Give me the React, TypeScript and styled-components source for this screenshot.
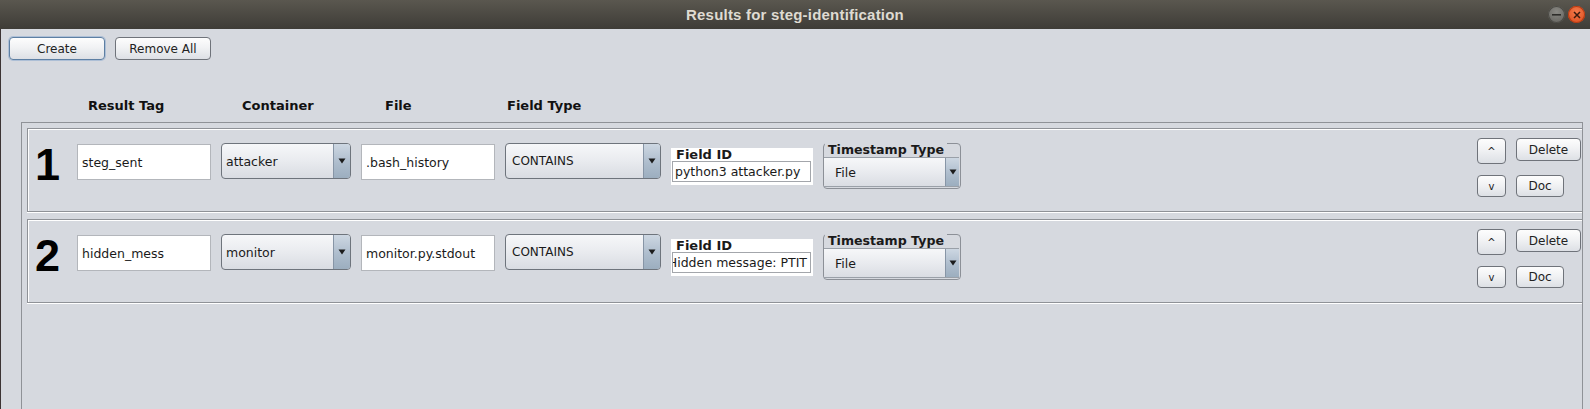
import styled, { createGlobalStyle, css } from 'styled-components';

const GlobalStyle = createGlobalStyle`
  html, body {
    margin: 0;
    padding: 0;
    background: #d6d9df;
    overflow: hidden;
  }
`;

const UI_FONT = `"DejaVu Sans", "Liberation Sans", sans-serif`;

const Window = styled.div`
  width: 1590px;
  height: 409px;
  display: flex;
  flex-direction: column;
  font-family: ${UI_FONT};
  color: #1a1a1a;
  overflow: hidden;
`;

const TitleBar = styled.div`
  height: 29px;
  flex: none;
  display: grid;
  grid-template-columns: 1fr auto 1fr;
  align-items: center;
  background: linear-gradient(#5a574f, #3e3c37);
`;

const TitleText = styled.div`
  grid-column: 2;
  font-family: "Liberation Sans", "DejaVu Sans", sans-serif;
  font-weight: bold;
  font-size: 15px;
  color: #dfdbd2;
  letter-spacing: 0.2px;
`;

const WindowControls = styled.div`
  grid-column: 3;
  justify-self: end;
  display: flex;
  gap: 3px;
  padding-right: 5px;
`;

const CircleButton = styled.div<{ $close?: boolean }>`
  width: 17px;
  height: 17px;
  border-radius: 50%;
  display: flex;
  align-items: center;
  justify-content: center;
  ${({ $close }) =>
    $close
      ? css`
          background: radial-gradient(circle at 50% 35%, #f47a4b, #d9491a);
          box-shadow: inset 0 0 0 1px #b63a12;
        `
      : css`
          background: radial-gradient(circle at 50% 35%, #8a8984, #5f5e59);
          box-shadow: inset 0 0 0 1px #4a4944;
        `}
`;

const Content = styled.div`
  flex: 1;
  display: flex;
  flex-direction: column;
  padding-top: 8px;
  border-left: 1px solid #3c3434;
  background: #d6d9df;
  min-height: 0;
`;

const Toolbar = styled.div`
  display: flex;
  gap: 10px;
  padding-left: 8px;
`;

const Button = styled.button<{ $w: number; $h?: number; $focused?: boolean; $small?: boolean }>`
  width: ${({ $w }) => $w}px;
  height: ${({ $h }) => $h ?? 23}px;
  padding: 0;
  font-family: ${UI_FONT};
  font-size: ${({ $small }) => ($small ? 10 : 12)}px;
  color: #222;
  background: linear-gradient(#fdfdfd, #f1f2f4 45%, #dde0e5);
  border: 1px solid #6f737a;
  border-radius: 4px;
  display: flex;
  align-items: center;
  justify-content: center;
  ${({ $focused }) =>
    $focused &&
    css`
      border-color: #5d7fa3;
      box-shadow: 0 0 0 1px rgba(125, 160, 205, 0.45);
    `}
`;

const HeaderRow = styled.div`
  display: flex;
  padding-left: 87px;
  margin-top: 38px;
  height: 15px;
  margin-bottom: 9px;
`;

const HeaderCell = styled.div<{ $w?: number }>`
  width: ${({ $w }) => ($w ? `${$w}px` : 'auto')};
  font-weight: bold;
  font-size: 13px;
  line-height: 15px;
  color: #111;
`;

const OuterPanel = styled.div`
  flex: 1;
  margin-left: 20px;
  margin-right: 7px;
  border: 1px solid #8f9297;
  border-bottom: none;
  padding: 5px 0 0 5px;
  display: flex;
  flex-direction: column;
  gap: 7px;
  overflow: hidden;
`;

const ResultRow = styled.div`
  height: 84px;
  box-sizing: border-box;
  flex: none;
  border: 1px solid #8f9297;
  border-right: none;
  box-shadow: inset 1px 1px 0 #fff, 0 1px 0 #fff;
  display: flex;
  align-items: flex-start;
  gap: 10px;
`;

const RowNumber = styled.div`
  width: 32px;
  padding-left: 7px;
  margin-top: 13px;
  font-family: "Liberation Sans", Arial, sans-serif;
  font-weight: bold;
  font-size: 45px;
  line-height: 46px;
  color: #000;
`;

const TextField = styled.div<{ $w: number }>`
  width: ${({ $w }) => $w}px;
  height: 36px;
  box-sizing: border-box;
  margin-top: 15px;
  background: #fff;
  border: 1px solid #b3b6bb;
  padding-left: 4px;
  display: flex;
  align-items: center;
  font-size: 12.5px;
  white-space: nowrap;
`;

const Combo = styled.div<{ $w: number }>`
  width: ${({ $w }) => $w}px;
  height: 36px;
  box-sizing: border-box;
  margin-top: 14px;
  border: 1px solid #6e747c;
  border-radius: 4px;
  background: linear-gradient(#f6f7f9, #e9ebef 50%, #d9dce2);
  display: flex;
  overflow: hidden;
`;

const ComboText = styled.div<{ $caps?: boolean; $inset?: number }>`
  flex: 1;
  display: flex;
  align-items: center;
  padding-left: ${({ $inset }) => $inset ?? 4}px;
  font-size: ${({ $caps }) => ($caps ? 12 : 12.5)}px;
  white-space: nowrap;
`;

const ArrowBox = styled.div`
  width: 16px;
  flex: none;
  border-left: 1px solid #8795a6;
  background: linear-gradient(#cdd7e2, #aebdcd 55%, #9caebf);
  display: flex;
  align-items: center;
  justify-content: center;
`;

const SmallArrowBox = styled(ArrowBox)`
  width: 13px;
`;

const FieldIdPanel = styled.div`
  width: 142px;
  height: 37px;
  margin-top: 19px;
  background: #fff;
  display: flex;
  flex-direction: column;
`;

const FieldIdLabel = styled.div`
  font-weight: bold;
  font-size: 13px;
  line-height: 13px;
  height: 13px;
  padding-left: 5px;
`;

const FieldIdInput = styled.div<{ $scrolled?: boolean }>`
  height: 21px;
  box-sizing: border-box;
  margin: 0 2px 0 1px;
  border: 1px solid #a3a6ab;
  display: flex;
  align-items: center;
  justify-content: ${({ $scrolled }) => ($scrolled ? 'flex-end' : 'flex-start')};
  padding: ${({ $scrolled }) => ($scrolled ? '0 3px 0 0' : '0 0 0 2px')};
  overflow: hidden;
  font-size: 12.5px;
  white-space: nowrap;

  & > span {
    flex: none;
  }
`;

const TitledBox = styled.div`
  width: 138px;
  height: 46px;
  box-sizing: border-box;
  margin-top: 14px;
  border: 1px solid #8c9097;
  border-radius: 4px;
  display: flex;
  flex-direction: column;
  padding-right: 1px;
`;

const BoxTitle = styled.div`
  align-self: flex-start;
  margin-top: -1px;
  margin-left: 1px;
  padding: 0 3px 0 3px;
  height: 14px;
  background: #d6d9df;
  font-weight: bold;
  font-size: 12.6px;
  line-height: 13px;
`;

const InnerCombo = styled.div`
  height: 30px;
  box-sizing: border-box;
  border-top: 1px solid #9aa0a8;
  border-bottom: 1px solid #9aa0a8;
  background: linear-gradient(#f6f7f9, #e9ebef 50%, #dadde3);
  display: flex;
`;

const ControlGrid = styled.div`
  margin-left: auto;
  margin-right: 1px;
  margin-top: 9px;
  display: grid;
  grid-template-columns: 29px 65px;
  column-gap: 10px;
  row-gap: 11px;
  align-items: start;
`;

function Arrow() {
  return (
    <svg width="8" height="6" viewBox="0 0 8 6">
      <polygon points="0.5,0.5 7.5,0.5 4,5.5" fill="#1c1c1c" />
    </svg>
  );
}

type Result = {
  tag: string;
  container: string;
  file: string;
  fieldType: string;
  fieldId: string;
  fieldIdScrolled?: boolean;
  timestamp: string;
};

const results: Result[] = [
  {
    tag: 'steg_sent',
    container: 'attacker',
    file: '.bash_history',
    fieldType: 'CONTAINS',
    fieldId: 'python3 attacker.py',
    timestamp: 'File',
  },
  {
    tag: 'hidden_mess',
    container: 'monitor',
    file: 'monitor.py.stdout',
    fieldType: 'CONTAINS',
    fieldId: 'Hidden message: PTIT',
    fieldIdScrolled: true,
    timestamp: 'File',
  },
];

function ResultPanel({ index, result }: { index: number; result: Result }) {
  return (
    <ResultRow>
      <RowNumber>{index}</RowNumber>
      <TextField $w={134}>{result.tag}</TextField>
      <Combo $w={130}>
        <ComboText>{result.container}</ComboText>
        <ArrowBox>
          <Arrow />
        </ArrowBox>
      </Combo>
      <TextField $w={134}>{result.file}</TextField>
      <Combo $w={156}>
        <ComboText $caps $inset={6}>
          {result.fieldType}
        </ComboText>
        <ArrowBox>
          <Arrow />
        </ArrowBox>
      </Combo>
      <FieldIdPanel>
        <FieldIdLabel>Field ID</FieldIdLabel>
        <FieldIdInput $scrolled={result.fieldIdScrolled}>
          <span>{result.fieldId}</span>
        </FieldIdInput>
      </FieldIdPanel>
      <TitledBox>
        <BoxTitle>Timestamp Type</BoxTitle>
        <InnerCombo>
          <ComboText $inset={11}>{result.timestamp}</ComboText>
          <SmallArrowBox>
            <Arrow />
          </SmallArrowBox>
        </InnerCombo>
      </TitledBox>
      <ControlGrid>
        <Button $w={29} $h={26} $small>^</Button>
        <Button $w={65}>Delete</Button>
        <Button $w={29} $h={22} $small>v</Button>
        <Button $w={48} $h={22}>Doc</Button>
      </ControlGrid>
    </ResultRow>
  );
}

export default function App() {
  return (
    <>
      <GlobalStyle />
      <Window>
        <TitleBar>
          <TitleText>Results for steg-identification</TitleText>
          <WindowControls>
            <CircleButton>
              <svg width="9" height="2" viewBox="0 0 9 2">
                <rect width="9" height="1.6" fill="#2e2d2a" />
              </svg>
            </CircleButton>
            <CircleButton $close>
              <svg width="8" height="8" viewBox="0 0 8 8">
                <path d="M1 1 L7 7 M7 1 L1 7" stroke="#3a1a0e" strokeWidth="1.5" />
              </svg>
            </CircleButton>
          </WindowControls>
        </TitleBar>
        <Content>
          <Toolbar>
            <Button $w={96} $focused>Create</Button>
            <Button $w={96}>Remove All</Button>
          </Toolbar>
          <HeaderRow>
            <HeaderCell $w={154}>Result Tag</HeaderCell>
            <HeaderCell $w={143}>Container</HeaderCell>
            <HeaderCell $w={122}>File</HeaderCell>
            <HeaderCell>Field Type</HeaderCell>
          </HeaderRow>
          <OuterPanel>
            {results.map((r, i) => (
              <ResultPanel key={r.tag} index={i + 1} result={r} />
            ))}
          </OuterPanel>
        </Content>
      </Window>
    </>
  );
}
